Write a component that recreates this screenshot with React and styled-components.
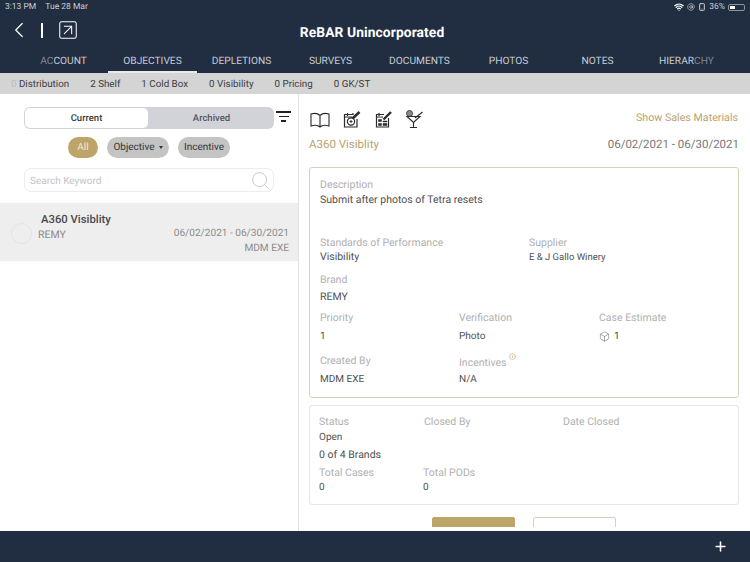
import styled, { createGlobalStyle } from "styled-components";
import { ChevronLeft, SquareArrowUpRight, Search, Plus, Box, Info, Wifi, Smartphone, AtSign } from "lucide-react";

const Global = createGlobalStyle`
  html, body { margin: 0; padding: 0; background: #fff; }
  body { font-family: Roboto, "Liberation Sans", sans-serif; text-rendering: geometricPrecision; }
`;

const Page = styled.div`
  width: 750px;
  height: 562px;
  display: flex;
  flex-direction: column;
  overflow: hidden;
`;

const Header = styled.header`
  height: 73px;
  flex: none;
  background: #212d40;
  color: #fff;
  display: flex;
  flex-direction: column;
`;

const StatusBar = styled.div`
  height: 14px;
  padding: 0 5px;
  display: flex;
  align-items: center;
  justify-content: space-between;
  font-size: 8.5px;
  color: #c9ced5;
`;

const StatusGroup = styled.div`
  display: flex;
  align-items: center;
  gap: 3px;
`;

const DateText = styled.span`
  margin-left: 6px;
`;

const Battery = styled.span`
  width: 17px;
  height: 7px;
  border: 1px solid #8a93a0;
  border-radius: 2px;
  display: flex;
  padding: 1px;
  box-sizing: border-box;
  &::before {
    content: "";
    width: 40%;
    background: #fff;
  }
`;

const TitleRow = styled.div`
  height: 34px;
  box-sizing: border-box;
  padding-top: 3px;
  display: flex;
  align-items: center;
  justify-content: center;
  position: relative;
`;

const Title = styled.h1`
  margin: 0 6px 0 0;
  font-size: 13.8px;
  font-weight: 700;
  letter-spacing: 0.1px;
`;

const NavTools = styled.div`
  position: absolute;
  left: 6px;
  top: 3px;
  display: flex;
  align-items: center;
`;

const Divider = styled.span`
  width: 1.5px;
  height: 15px;
  margin: 0 14px 0 9px;
  background: #fff;
`;

const Tabs = styled.nav`
  height: 25px;
  display: grid;
  grid-template-columns: repeat(8, 89px);
  padding-left: 19px;
`;

const Tab = styled.div`
  display: flex;
  align-items: center;
  justify-content: center;
  font-size: 10.2px;
  color: #c8ccd3;
  border-bottom: 2px solid ${(p) => (p.$active ? "#e8eaed" : "transparent")};
  padding-top: 4px;
  box-sizing: border-box;
`;

const TabFade = styled.span`
  color: #7f8794;
`;

const CountBar = styled.div`
  height: 21px;
  flex: none;
  box-sizing: border-box;
  padding: 1px 0 0 11px;
  background: #d4d4d4;
  display: flex;
  align-items: center;
  gap: 21px;
  font-size: 9.8px;
  color: #3c3c3c;
`;

const Faded = styled.span`
  color: #bdbdbd;
`;

const Body = styled.div`
  flex: 1;
  min-height: 0;
  display: grid;
  grid-template-columns: 299px 1fr;
  grid-template-rows: minmax(0, 1fr);
`;

const Sidebar = styled.aside`
  border-right: 1px solid #e3e3e3;
  padding-top: 13px;
  display: flex;
  flex-direction: column;
`;

const SegmentRow = styled.div`
  display: flex;
  align-items: flex-start;
  padding-left: 24px;
  gap: 2px;
`;

const Segment = styled.div`
  width: 250px;
  height: 22px;
  background: #d1d3d8;
  border-radius: 6px;
  display: grid;
  grid-template-columns: 123px 1fr;
  padding: 1px;
  box-sizing: border-box;
`;

const SegmentOption = styled.div`
  display: flex;
  align-items: center;
  justify-content: center;
  font-size: 9.5px;
  font-weight: 500;
  border-radius: 5px;
  padding-left: ${(p) => (p.$active ? 0 : 2)}px;
  color: ${(p) => (p.$active ? "#3a3a3a" : "#55585e")};
  background: ${(p) => (p.$active ? "#fff" : "transparent")};
`;

const FilterIcon = styled.div`
  width: 15px;
  padding-top: 4px;
  display: flex;
  flex-direction: column;
  align-items: center;
  gap: 3px;
`;

const FilterLine = styled.span`
  height: 1.5px;
  background: #222;
  width: ${(p) => p.$width}px;
`;

const Pills = styled.div`
  display: flex;
  justify-content: center;
  gap: 9px;
  margin-top: 8px;
`;

const Pill = styled.div`
  height: 21px;
  width: ${(p) => p.$width}px;
  display: flex;
  align-items: center;
  justify-content: center;
  gap: 4px;
  border-radius: 11px;
  font-size: 10px;
  color: ${(p) => (p.$active ? "#f1e9d6" : "#333")};
  background: ${(p) => (p.$active ? "#bda468" : "#c4c4c4")};
`;

const Caret = styled.span`
  border-left: 2.5px solid transparent;
  border-right: 2.5px solid transparent;
  border-top: 3px solid #333;
`;

const SearchBox = styled.div`
  margin: 10px 0 0 24px;
  width: 250px;
  height: 24px;
  box-sizing: border-box;
  border: 1px solid #ececec;
  border-radius: 7px;
  padding: 0 2px 0 5px;
  display: flex;
  align-items: center;
  justify-content: space-between;
  font-size: 10px;
  color: #c4c4c4;
`;

const SearchHint = styled.span`
  padding-top: 2px;
`;

const ListItem = styled.div`
  margin-top: 11px;
  height: 58px;
  background: #eeeeee;
  display: flex;
  align-items: center;
  padding: 0 9px 0 11px;
`;

const Radio = styled.span`
  width: 21px;
  height: 21px;
  box-sizing: border-box;
  border: 1px solid #e3e3e3;
  border-radius: 50%;
  flex: none;
  margin-top: 2px;
`;

const ItemMain = styled.div`
  margin-left: 6px;
  flex: 1;
  align-self: flex-start;
  padding-top: 10px;
`;

const ItemTitle = styled.div`
  font-size: 11.3px;
  font-weight: 500;
  color: #4a4a4a;
  margin-left: 3px;
`;

const ItemBrand = styled.div`
  font-size: 10.5px;
  color: #8a8a8a;
  margin-top: 2px;
`;

const ItemMeta = styled.div`
  align-self: flex-end;
  padding-bottom: 5px;
  text-align: right;
  font-size: 10.1px;
  line-height: 15px;
  color: #8c8c8c;
`;

const Detail = styled.main`
  margin-bottom: 4px;
  padding: 16px 11px 0 10px;
  min-width: 0;
  overflow: hidden;
  display: flex;
  flex-direction: column;
`;

const DetailTop = styled.div`
  display: flex;
  align-items: flex-start;
  justify-content: space-between;
  height: 28px;
  flex: none;
`;

const IconRow = styled.div`
  display: flex;
  gap: 11px;
`;

const SalesLink = styled.span`
  font-size: 10.7px;
  line-height: 12px;
  color: #b9a26d;
  margin: 2px 1px 0 0;
`;

const DetailHead = styled.div`
  display: flex;
  justify-content: space-between;
  align-items: center;
  height: 12px;
  flex: none;
`;

const ObjectiveName = styled.span`
  font-size: 11.5px;
  color: #b9a26d;
`;

const DateRange = styled.span`
  font-size: 11.5px;
  color: #777;
`;

const Card = styled.section`
  box-sizing: border-box;
  border: 1px solid ${(p) => (p.$accent ? "#d8d0b8" : "#e6e6e6")};
  border-radius: 3px;
  padding: ${(p) => (p.$accent ? "10px" : "9px")};
  height: ${(p) => p.$height}px;
  margin-top: ${(p) => p.$gap}px;
  flex: none;
`;

const Label = styled.div`
  font-size: 10.5px;
  line-height: 13px;
  color: #b0b0b0;
  position: relative;
  top: ${(p) => p.$drop ?? 0}px;
`;

const Value = styled.div`
  font-size: ${(p) => p.$size ?? 10}px;
  line-height: 13px;
  color: #505050;
  margin-top: ${(p) => p.$top ?? 3}px;
  display: flex;
  align-items: center;
  gap: 4px;
`;

const Row = styled.div`
  display: grid;
  grid-template-columns: ${(p) => p.$cols};
  margin-top: ${(p) => p.$top ?? 0}px;
`;

const InfoMark = styled.span`
  position: absolute;
  left: 50px;
  top: -3px;
  color: #bda468;
  display: flex;
`;

const Actions = styled.div`
  display: flex;
  justify-content: center;
  gap: 18px;
  margin-top: 12px;
  flex: none;
`;

const Button = styled.div`
  width: ${(p) => p.$width}px;
  height: 28px;
  box-sizing: border-box;
  border-radius: 2px;
  border: 1px solid ${(p) => (p.$primary ? "#bda468" : "#d8d0b8")};
  background: ${(p) => (p.$primary ? "#bda468" : "#fff")};
  color: ${(p) => (p.$primary ? "#fff" : "#666")};
  font-size: 10.5px;
  display: flex;
  align-items: center;
  justify-content: center;
`;

const Footer = styled.footer`
  height: 31px;
  flex: none;
  background: #212d40;
  color: #fff;
  display: flex;
  align-items: center;
  justify-content: flex-end;
  padding-right: 22px;
`;

const BookIcon = () => (
  <svg width="22" height="18" viewBox="0 0 22 18" fill="none" stroke="#2b2b2b" strokeWidth="1.1">
    <path d="M11 5.500C9 3.500 5 3 2 4V16C5 15 9 15 11 17C13 15 17 15 20 16V4C17 3 13 3.500 11 5.500V17" />
  </svg>
);

const TargetIcon = () => (
  <svg width="22" height="18" viewBox="0 0 22 18" fill="none" stroke="#2b2b2b" strokeWidth="1.2">
    <path d="M11 4.500H2.500V17H15V9" />
    <path d="M2.500 7H10M5.500 3V6M11 3V5" />
    <circle cx="9" cy="11.500" r="3.600" />
    <path d="M9 10V13M7.500 11.500H10.500" strokeWidth="0.9" />
    <path d="M10.500 8.500L17.500 2" strokeWidth="2.600" />
  </svg>
);

const GridIcon = () => (
  <svg width="19" height="18" viewBox="0 0 19 18" fill="none" stroke="#2b2b2b" strokeWidth="1.2">
    <path d="M9 4.500H1.500V17H13.500V8" />
    <path d="M1.500 7H8M4 3V6" />
    <path d="M3.500 9.500H6.500V11.500H3.500ZM8 11H12V12H8ZM3.500 13.500H6.500V15.500H3.500ZM8 13.500H12V15.500H8Z" fill="#2b2b2b" strokeWidth="0.5" />
    <path d="M8.500 9.500L16 2" strokeWidth="2.400" />
  </svg>
);

const CocktailIcon = () => (
  <svg width="19" height="18" viewBox="0 0 19 18" fill="none" stroke="#2b2b2b" strokeWidth="1.1">
    <circle cx="4.500" cy="3.500" r="3" fill="#8a8a8a" strokeWidth="0.8" />
    <path d="M2 6.500H15L8.500 12.500ZM8.500 12.500V17M5 17.500H12M10 8L17.500 2" />
  </svg>
);

export default function App() {
  return (
    <Page>
      <Global />
      <Header>
        <StatusBar>
          <StatusGroup>
            3:13 PM<DateText>Tue 28 Mar</DateText>
          </StatusGroup>
          <StatusGroup>
            <Wifi size={10} strokeWidth={3} color="#fff" />
            <AtSign size={8} />
            <Smartphone size={8} strokeWidth={3} />
            36%
            <Battery />
          </StatusGroup>
        </StatusBar>
        <TitleRow>
          <NavTools>
            <ChevronLeft size={26} strokeWidth={1.1} />
            <Divider />
            <SquareArrowUpRight size={22} strokeWidth={1.1} />
          </NavTools>
          <Title>ReBAR Unincorporated</Title>
        </TitleRow>
        <Tabs>
          <Tab><span><TabFade>AC</TabFade>COUNT</span></Tab>
          <Tab $active>OBJECTIVES</Tab>
          <Tab>DEPLETIONS</Tab>
          <Tab>SURVEYS</Tab>
          <Tab>DOCUMENTS</Tab>
          <Tab>PHOTOS</Tab>
          <Tab>NOTES</Tab>
          <Tab><span>HIERAR<TabFade>CHY</TabFade></span></Tab>
        </Tabs>
      </Header>

      <CountBar>
        <span><Faded>0 </Faded>Distribution</span>
        <span>2 Shelf</span>
        <span>1 Cold Box</span>
        <span>0 Visibility</span>
        <span>0 Pricing</span>
        <span>0 GK/ST</span>
      </CountBar>

      <Body>
        <Sidebar>
          <SegmentRow>
            <Segment>
              <SegmentOption $active>Current</SegmentOption>
              <SegmentOption>Archived</SegmentOption>
            </Segment>
            <FilterIcon>
              <FilterLine $width={15} />
              <FilterLine $width={10} />
              <FilterLine $width={5} />
            </FilterIcon>
          </SegmentRow>
          <Pills>
            <Pill $active $width={30}>All</Pill>
            <Pill $width={62}>Objective <Caret /></Pill>
            <Pill $width={52}>Incentive</Pill>
          </Pills>
          <SearchBox>
            <SearchHint>Search Keyword</SearchHint>
            <Search size={21} strokeWidth={0.9} color="#bbb" />
          </SearchBox>
          <ListItem>
            <Radio />
            <ItemMain>
              <ItemTitle>A360 Visiblity</ItemTitle>
              <ItemBrand>REMY</ItemBrand>
            </ItemMain>
            <ItemMeta>
              06/02/2021 - 06/30/2021
              <br />
              MDM EXE
            </ItemMeta>
          </ListItem>
        </Sidebar>

        <Detail>
          <DetailTop>
            <IconRow>
              <BookIcon />
              <TargetIcon />
              <GridIcon />
              <CocktailIcon />
            </IconRow>
            <SalesLink>Show Sales Materials</SalesLink>
          </DetailTop>
          <DetailHead>
            <ObjectiveName>A360 Visiblity</ObjectiveName>
            <DateRange>06/02/2021 - 06/30/2021</DateRange>
          </DetailHead>
          <Card $accent $height={231} $gap={17}>
            <Label>Description</Label>
            <Value $size={10.5} $top={2}>Submit after photos of Tetra resets</Value>
            <Row $cols="209px 1fr" $top={30}>
              <div>
                <Label>Standards of Performance</Label>
                <Value $size={10.5} $top={1}>Visibility</Value>
              </div>
              <div>
                <Label>Supplier</Label>
                <Value $size={9.5} $top={2}>E &amp; J Gallo Winery</Value>
              </div>
            </Row>
            <Row $cols="1fr" $top={9}>
              <div>
                <Label>Brand</Label>
                <Value $size={10.5} $top={4}>REMY</Value>
              </div>
            </Row>
            <Row $cols="139px 140px 1fr" $top={8}>
              <div>
                <Label>Priority</Label>
                <Value $top={6}>1</Value>
              </div>
              <div>
                <Label>Verification</Label>
                <Value $top={6}>Photo</Value>
              </div>
              <div>
                <Label>Case Estimate</Label>
                <Value $top={6}><Box size={11} strokeWidth={1} />1</Value>
              </div>
            </Row>
            <Row $cols="139px 1fr" $top={11}>
              <div>
                <Label>Created By</Label>
                <Value $top={6}>MDM EXE</Value>
              </div>
              <div>
                <Label $drop={2}>
                  Incentives
                  <InfoMark><Info size={7} /></InfoMark>
                </Label>
                <Value $top={6}>N/A</Value>
              </div>
            </Row>
          </Card>
          <Card $height={100} $gap={7}>
            <Row $cols="105px 139px 1fr">
              <Label>Status</Label>
              <Label>Closed By</Label>
              <Label>Date Closed</Label>
            </Row>
            <Value $top={3}>Open</Value>
            <Value $size={10.5} $top={4}>0 of 4 Brands</Value>
            <Row $cols="104px 1fr" $top={5}>
              <Label>Total Cases</Label>
              <Label>Total PODs</Label>
            </Row>
            <Row $cols="104px 1fr" $top={2}>
              <Value $top={0}>0</Value>
              <Value $top={0}>0</Value>
            </Row>
          </Card>
          <Actions>
            <Button $primary $width={83}>Execute</Button>
            <Button $width={83}>Mark as Invalid</Button>
          </Actions>
        </Detail>
      </Body>

      <Footer>
        <Plus size={15} strokeWidth={2.5} />
      </Footer>
    </Page>
  );
}
